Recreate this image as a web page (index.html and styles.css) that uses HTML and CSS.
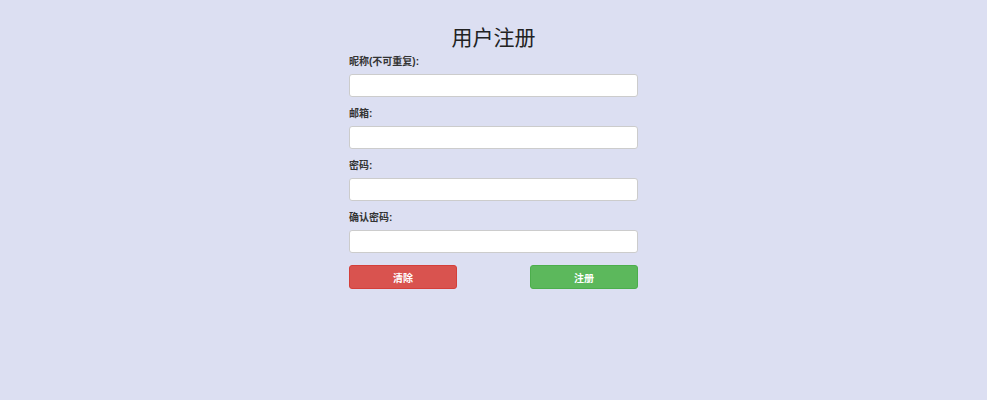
FILE: index.html
```html
<!DOCTYPE html>
<html lang="zh-CN">
<head>
    <meta charset="UTF-8">
    <meta name="viewport" content="width=device-width, initial-scale=1.0">
    <title>用户注册</title>
    <link rel="stylesheet" href="styles.css">
</head>
<body>

    <div class="register-container">
        <h2>用户注册</h2>
        <form id="registerForm">
            <div class="input-group">
                <label for="nickname">昵称(不可重复):</label>
                <input type="text" id="nickname" name="nickname">
            </div>
            <div class="input-group">
                <label for="email">邮箱:</label>
                <input type="text" id="email" name="email">
            </div>
            <div class="input-group">
                <label for="password">密码:</label>
                <input type="password" id="password" name="password">
            </div>
            <div class="input-group">
                <label for="confirm">确认密码:</label>
                <input type="password" id="confirm" name="confirm">
            </div>
            <div class="button-row">
                <button type="reset" class="btn btn-clear">清除</button>
                <button type="button" class="btn btn-submit">注册</button>
            </div>
        </form>
    </div>

</body>
</html>
```

FILE: styles.css
```css
body {
    font-family: "Liberation Sans", "Noto Sans CJK SC", sans-serif;
    margin: 0;
    padding: 23px 0 0;
    background-color: #dcdff2;
    color: #333;
}
.register-container {
    width: 289px;
    margin: 0 auto;
}
.register-container h2 {
    font-family: "Liberation Serif", "Noto Sans CJK SC", serif;
    font-weight: normal;
    font-size: 21px;
    line-height: 30px;
    text-align: center;
    margin: 0 0 1px;
    color: #222;
}
.input-group {
    margin-bottom: 9px;
}
.input-group label {
    display: block;
    font-size: 10px;
    font-weight: bold;
    line-height: 16px;
    margin-bottom: 4px;
}
.input-group input {
    display: block;
    box-sizing: border-box;
    width: 100%;
    height: 23px;
    padding: 4px 8px;
    font-size: 12px;
    background-color: #fff;
    border: 1px solid #ccc;
    border-radius: 3px;
}
.button-row {
    display: flex;
    justify-content: space-between;
    padding-top: 3px;
}
.btn {
    width: 108px;
    height: 24px;
    padding: 0;
    color: #fff;
    font-family: inherit;
    font-size: 10px;
    font-weight: bold;
    border-radius: 3px;
}
.btn-clear {
    background-color: #d9534f;
    border: 1px solid #d43f3a;
}
.btn-submit {
    background-color: #5cb85c;
    border: 1px solid #4cae4c;
}
```
